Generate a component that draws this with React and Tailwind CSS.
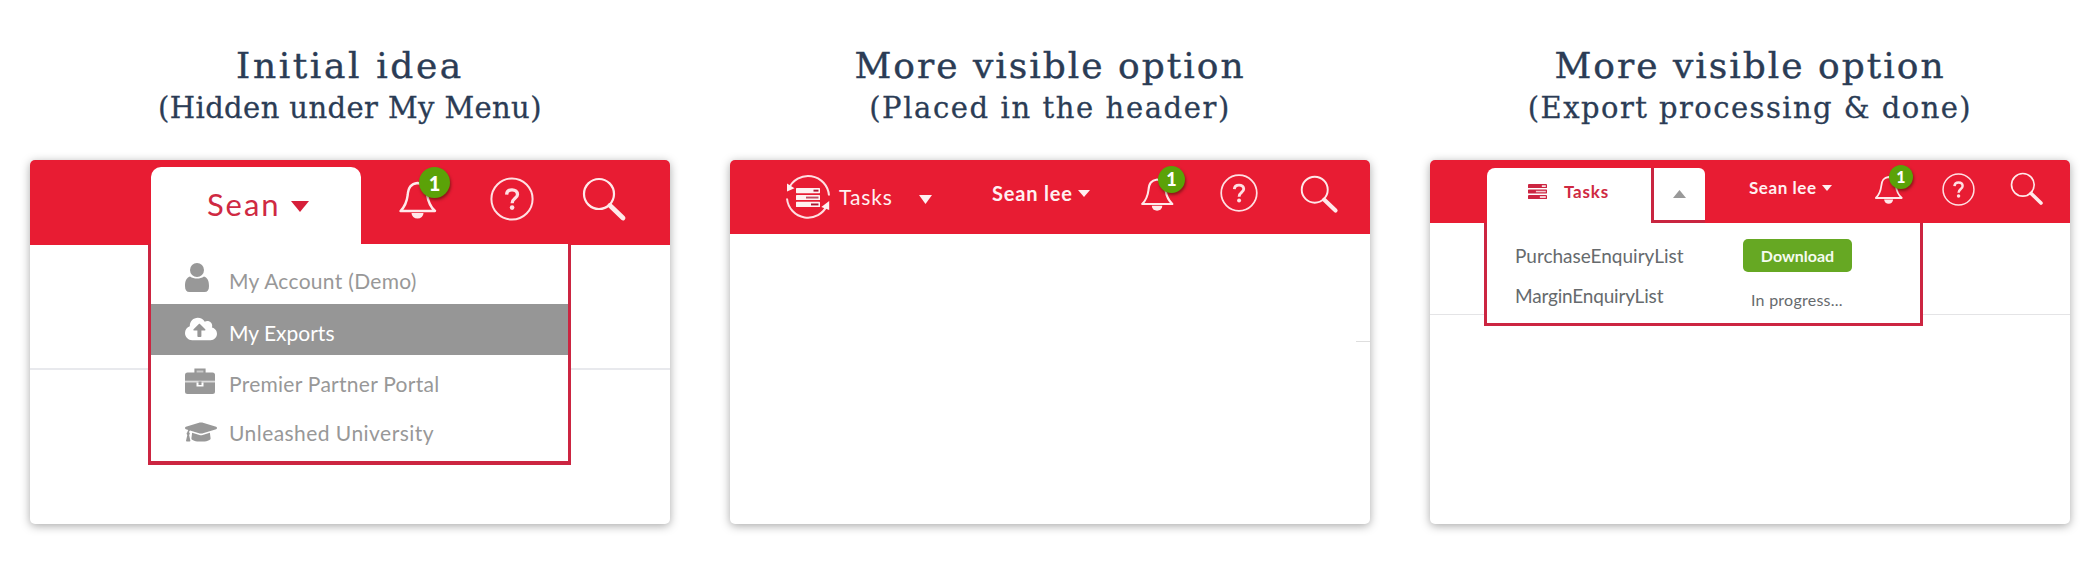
import { FaCloudUploadAlt, FaGraduationCap } from 'react-icons/fa'

const Bell = ({ className, badge }) => (
  <div className={'relative shrink-0 ' + className}>
    <svg viewBox="0 0 40 41" className="block w-full" fill="none" stroke="#ffe9ea" strokeWidth="2.4" strokeLinejoin="round">
      <path d="M2.5 32C7.5 27 9 22 9.7 16C10.3 8 13 5 19.5 4C26 5 28.5 8 29.2 16C30 22 31.5 27 37 32Z" />
      <path d="M13.5 34h12a6 5.6 0 0 1-12 0Z" fill="#ffe9ea" stroke="none" />
    </svg>
    <span className={'absolute flex items-center justify-center rounded-full bg-[#5ba208] font-black text-white shadow-[1px_2px_3px_rgba(60,20,0,0.55)] ' + badge}>1</span>
  </div>
)

const Help = ({ className }) => (
  <svg viewBox="0 0 44 44" className={'block shrink-0 ' + className} fill="none" stroke="#ffe0e3">
    <circle cx="22" cy="22" r="20.6" strokeWidth="2" />
    <path d="M16.6 17.6C16.8 14.4 19 12.8 22 12.8C25.2 12.8 27.5 14.7 27.5 17.4C27.5 21.3 22.1 21.4 22.1 26.2" strokeWidth="3.3" />
    <circle cx="22.1" cy="30.6" r="2.3" fill="#ffe0e3" stroke="none" />
  </svg>
)

const Search = ({ className }) => (
  <svg viewBox="0 0 45 45" className={'block shrink-0 ' + className} fill="none" stroke="#ffe9ea">
    <circle cx="17" cy="17" r="15" strokeWidth="2.2" />
    <path d="M28 28.5L41 41" strokeWidth="4.8" strokeLinecap="round" />
    <path d="M26.5 27L30 30.5" strokeWidth="2.4" />
  </svg>
)

const Caret = ({ className, up }) => (
  <svg viewBox="0 0 18 11" preserveAspectRatio="none" className={'block shrink-0 ' + className} fill="currentColor">
    <path d={up ? 'M9 0L18 11H0Z' : 'M0 0H18L9 11Z'} />
  </svg>
)

const Bars = ({ className, slot }) => (
  <svg viewBox="0 0 24 19" className={'block shrink-0 ' + className} fill="currentColor">
    <rect width="24" height="5.2" rx="0.6" />
    <rect y="6.9" width="24" height="5.2" rx="0.6" />
    <rect y="13.8" width="24" height="5.2" rx="0.6" />
    <g className={slot}>
      <rect x="17.5" y="1.7" width="5" height="1.9" />
      <rect x="10" y="8.6" width="12.5" height="1.9" opacity="0.75" />
      <rect x="15" y="15.5" width="7.5" height="1.9" />
    </g>
  </svg>
)

const TasksBadge = () => (
  <div className="mt-[14px] ml-[55px] grid h-[46px] w-[46px] shrink-0 place-items-center text-[#fff1f1]">
    <svg viewBox="0 0 46 46" className="col-start-1 row-start-1 h-[46px] w-[46px]" fill="none" stroke="#ffdfe2" strokeWidth="2">
      <path d="M3.6 15A21 21 0 0 1 44 21.5" />
      <path d="M42.2 31A21 21 0 0 1 2 24.5" />
      <path d="M2 9.5V17.5L9.5 14.2Z" fill="#fff1f1" stroke="none" />
      <path d="M44.2 27V36L36.3 33Z" fill="#fff1f1" stroke="none" />
    </svg>
    <Bars className="col-start-1 row-start-1 w-6" slot="text-[#a81430]" />
  </div>
)

const Person = () => (
  <svg viewBox="0 0 24 29" className="h-[29px] w-6" fill="currentColor">
    <ellipse cx="12" cy="7" rx="7" ry="7" />
    <path d="M5 13.5C9 16.3 15 16.3 19 13.5C22.5 14.5 24 18 24 23C24 27 22.5 29 19.5 29H4.5C1.5 29 0 27 0 23C0 18 1.5 14.5 5 13.5Z" />
  </svg>
)

const Briefcase = () => (
  <svg viewBox="0 0 30 26" className="h-[26px] w-[30px]" fill="currentColor">
    <path d="M10.5 5V1.5H19.5V5" fill="none" stroke="currentColor" strokeWidth="2.2" />
    <path d="M10.5 2H19.5V5H10.5Z" opacity="0.5" />
    <path d="M2.5 4.5H27.500Q30 4.500 30 7V12.800H0V7Q0 4.500 2.500 4.500Z" />
    <path d="M0 14.600H11.500V18.500H18.500V14.600H30V23.500Q30 26 27.500 26H2.500Q0 26 0 23.500Z" />
    <path d="M0 12.500H30V15H0Z" opacity="0.350" />
    <rect x="13.500" y="13.500" width="3" height="3.500" />
  </svg>
)

const MenuRow = ({ icon, children, className = '', textClass = '' }) => (
  <div className={'flex h-[51.5px] items-center pl-[33.5px] ' + className}>
    <div className="w-[44.5px] shrink-0">{icon}</div>
    <span className={'text-[21px] leading-6 whitespace-nowrap ' + textClass}>{children}</span>
  </div>
)

const Option = ({ title, titleClass, subtitle, subtitleClass, children }) => (
  <section className="w-[640px] shrink-0">
    <h2 className={'text-center font-["DejaVu_Serif",serif] text-[36px] leading-[44px] whitespace-nowrap text-[#2b3c55] [-webkit-text-stroke:0.4px_#2b3c55] ' + titleClass}>{title}</h2>
    <p className={'mt-0.5 text-center font-["DejaVu_Serif",serif] text-[29px] leading-9 whitespace-nowrap text-[#2b3c55] [-webkit-text-stroke:0.3px_#2b3c55] ' + subtitleClass}>{subtitle}</p>
    <div className="relative mt-[34px] h-[364px] rounded-[5px] bg-white shadow-[0_2px_10px_rgba(0,0,0,0.34)]">
      {children}
    </div>
  </section>
)

export default function App() {
  return (
    <main className='flex h-[574px] w-[2100px] gap-[60px] overflow-hidden bg-white px-[30px] pt-[44px] font-["Lato",sans-serif]'>
      <Option title="Initial idea" titleClass="tracking-[2.6px]" subtitle="(Hidden under My Menu)" subtitleClass="tracking-[0.4px]">
        <header className="flex h-[84.5px] items-start rounded-t-[5px] bg-[#e81c33]">
          <div className="mt-[7px] ml-[121px] flex h-[78px] w-[210px] shrink-0 rounded-t-[10px] bg-white pl-[56px] text-[#cf2942]">
            <span className="mt-[18.5px] w-[84px] text-[31px] leading-9 tracking-[1.9px]">Sean</span>
            <Caret className="mt-[34px] h-[11px] w-[18px] text-[#d61f3a]" />
          </div>
          <Bell className="mt-[19px] ml-[37px] w-10" badge="top-[-12px] left-[21px] h-[31px] w-[31px] text-[20px]" />
          <Help className="mt-[17px] ml-[52px] w-11" />
          <Search className="mt-[16.5px] ml-[48px] w-[45px]" />
        </header>
        <div className="mt-[123px] h-[2px] bg-[#e8e9ed]" />
        <div className="absolute top-[84px] left-[118px] h-[221px] w-[423px] border-x-3 border-b-4 border-[#cc2541] bg-white pt-2 text-[#989898]">
          <MenuRow icon={<Person />} textClass="mt-[7px] tracking-[0.3px]">My Account (Demo)</MenuRow>
          <MenuRow className="bg-[#969696] text-white" icon={<FaCloudUploadAlt className="h-[26px] w-8" />} textClass="mt-[7px]">My Exports</MenuRow>
          <MenuRow icon={<Briefcase />} textClass="mt-[7px] tracking-[0.27px]">Premier Partner Portal</MenuRow>
          <MenuRow icon={<FaGraduationCap className="h-[26px] w-8" />} textClass="mt-px tracking-[0.45px]">Unleashed University</MenuRow>
        </div>
      </Option>

      <Option title="More visible option" titleClass="tracking-[2px]" subtitle="(Placed in the header)" subtitleClass="tracking-[1.6px]">
        <header className="flex h-[73.5px] items-start rounded-t-[5px] bg-[#e81c33] text-[#fff0f1]">
          <TasksBadge />
          <span className="mt-[25px] ml-2 w-20 text-[21px] leading-6 tracking-[0.9px]">Tasks</span>
          <Caret className="mt-[35px] h-[9px] w-[13px]" />
          <span className="mt-[21px] ml-[60px] w-[86px] text-[20px] leading-6 font-bold tracking-[0.8px] whitespace-nowrap">Sean lee</span>
          <Caret className="mt-[30px] h-[7px] w-3" />
          <Bell className="mt-[16px] ml-[50px] w-[35px]" badge="top-[-10px] left-[18px] h-[27px] w-[27px] text-[18px]" />
          <Help className="mt-[14px] ml-[45px] w-[38px]" />
          <Search className="mt-[15px] ml-[42px] w-[39px]" />
        </header>
        <div className="mt-[107.5px] ml-auto h-px w-[14px] bg-[#dedede]" />
      </Option>

      <Option title="More visible option" titleClass="tracking-[2px]" subtitle="(Export processing & done)" subtitleClass="tracking-[1.45px]">
        <header className="flex h-[62.5px] items-start rounded-t-[5px] bg-[#e81c33] text-[#fff0f1]">
          <div className="mt-2 ml-[57px] flex h-[55px] w-[164px] shrink-0 items-start rounded-tl-[8px] bg-white text-[#cf2942]">
            <Bars className="mt-4 ml-[41px] w-[19px] text-[#cc2541]" slot="text-white" />
            <span className="mt-[14px] ml-[17px] text-[17px] leading-5 font-bold tracking-[0.8px]">Tasks</span>
          </div>
          <div className="mt-2 flex h-[55px] w-[54px] shrink-0 justify-center rounded-tr-[6px] border-b-3 border-l-3 border-[#c92540] bg-white text-[#999999]">
            <Caret up className="mt-[22px] h-2 w-[13px]" />
          </div>
          <span className="mt-[18px] ml-[44px] w-[73px] text-[17px] leading-5 font-bold tracking-[0.55px] whitespace-nowrap">Sean lee</span>
          <Caret className="mt-[25px] h-[6px] w-[10px]" />
          <Bell className="mt-[14px] ml-[41.5px] w-[30px]" badge="top-[-9px] left-[15.5px] h-[24px] w-[24px] text-[16px]" />
          <Help className="mt-[12.5px] ml-[38px] w-[33px]" />
          <Search className="mt-[12px] ml-[35.5px] w-[34px]" />
        </header>
        <div className="mt-[91.5px] h-px bg-[#e4e4e6]" />
        <div className="absolute top-[63px] left-[54px] grid h-[103px] w-[439px] grid-cols-[228px_1fr] grid-rows-[33px_41px] items-center border-x-3 border-b-3 border-[#cc2541] bg-white pt-[16px] pl-[28px] text-[#666a6d]">
          <span className="text-[19px] leading-6">PurchaseEnquiryList</span>
          <button className="h-[33px] w-[109px] rounded-[5px] bg-[#66a823] text-[16px] leading-5 font-bold text-[#f5fbef]">Download</button>
          <span className="mt-[6px] text-[19px] leading-6 tracking-[-0.18px]">MarginEnquiryList</span>
          <span className="mt-[14px] ml-[8px] text-[16px] leading-5 tracking-[0.25px]">In progress...</span>
        </div>
      </Option>
    </main>
  )
}
